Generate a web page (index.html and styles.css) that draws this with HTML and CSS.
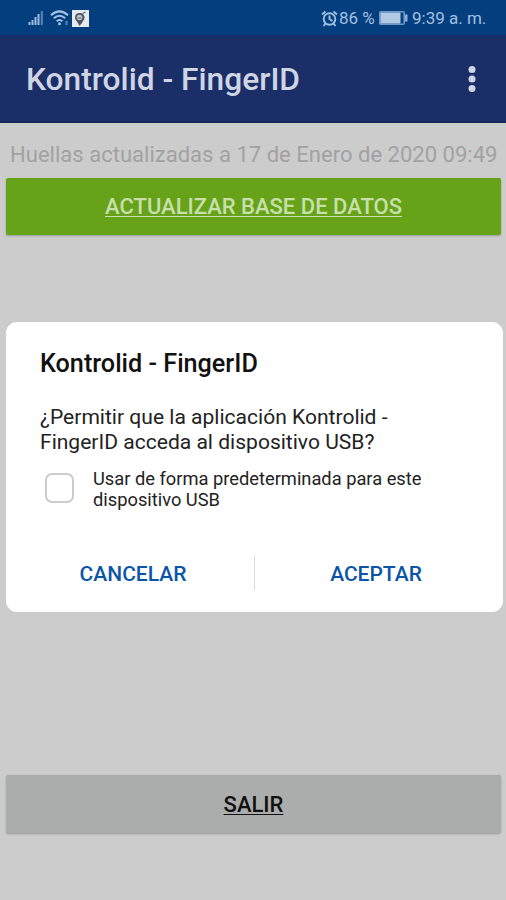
FILE: index.html
```html
<!DOCTYPE html>
<html lang="es">
<head>
<meta charset="utf-8">
<title>Kontrolid - FingerID</title>
<link rel="stylesheet" href="styles.css">
</head>
<body>
<div class="screen">
  <header class="status">
    <div class="status-left">
      <svg class="signal" width="16" height="16" viewBox="0 0 16 16"><path d="M1.5 12v3M4.500 10v5M7.500 7v8M10.500 4v11" stroke="#9dbce0" stroke-width="2"/><path d="M13.800 1v14" stroke="#5c86b8" stroke-width="2"/></svg>
      <svg class="wifi" width="20" height="16" viewBox="0 0 20 16" fill="none" stroke="#a3c1e4" stroke-width="2"><path d="M1 5.200Q9.500-2.400 18 5.200M3.800 8.300Q9.500 3.200 15.200 8.300M6.600 11.300Q9.500 8.700 12.400 11.300"/><circle cx="9.500" cy="13.800" r="1.500" fill="#a3c1e4" stroke="none"/><path d="M16.500 11v4" stroke="#5c86b8"/></svg>
      <svg class="badge" width="17" height="17" viewBox="0 0 17 17"><path fill="#e6ebf0" d="M0 0h17v17H0z"/><path fill="#4b5866" d="M7.500 3C4.500 3 3 5 3 7.500c0 2.500 2 3.500 2.500 5L7.500 16l2.500-3c.5-2 2.500-3 2.500-5.500S10.500 3 7.500 3z"/><circle cx="7.500" cy="7.500" r="2.800" fill="#c8c6c0"/><path d="M5.500 8h4M10.500 3.500l3-1.500" stroke="#59636d" stroke-width="1.200"/></svg>
    </div>
    <div class="status-right">
      <svg class="alarm" width="17" height="17" viewBox="0 0 17 17" fill="none" stroke="#a3bfe1" stroke-width="1.900"><circle cx="8.500" cy="9" r="5.800"/><path d="M8.500 5.500V9l3 2M1 4.500l3.500-3M16 4.500l-3.500-3M4.500 13.500L2.500 16M12.500 13.500l2 2.500"/></svg>
      <span class="percent">86 %</span>
      <svg class="battery" width="29" height="14" viewBox="0 0 29 14"><rect x=".8" y=".8" width="24.400" height="12.400" rx="1" fill="none" stroke="#6f98c8" stroke-width="1.600"/><path fill="#b3c8e3" d="M1.500 1.500h20v11h-20z"/><path fill="#8eafd7" d="M26 3.500h2.500v7H26z"/></svg>
      <span class="time">9:39 a. m.</span>
    </div>
  </header>
  <div class="appbar">
    <h1 class="app-title">Kontrolid - FingerID</h1>
    <svg class="more" width="8" height="28" viewBox="0 0 8 28" fill="#d0d6e6"><circle cx="4" cy="4.500" r="3.500"/><circle cx="4" cy="14" r="3.500"/><circle cx="4" cy="23.500" r="3.500"/></svg>
  </div>
  <main class="content">
    <p class="updated">Huellas actualizadas a 17 de Enero de 2020 09:49</p>
    <button class="btn update"><span class="label">ACTUALIZAR BASE DE DATOS</span></button>
    <section class="dialog">
      <h2 class="dialog-title">Kontrolid - FingerID</h2>
      <p class="question">¿Permitir que la aplicación Kontrolid -<br>FingerID acceda al dispositivo USB?</p>
      <label class="option"><span class="box"></span><span>Usar de forma predeterminada para este<br>dispositivo USB</span></label>
      <div class="actions">
        <button class="action cancel">CANCELAR</button>
        <span class="divider"></span>
        <button class="action accept">ACEPTAR</button>
      </div>
    </section>
    <button class="btn exit"><span class="label">SALIR</span></button>
  </main>
</div>
</body>
</html>
```
FILE: styles.css
```css
* { box-sizing: border-box; }
body { margin: 0; font-family: Roboto, "Liberation Sans", sans-serif; }
h1, h2, p { margin: 0; white-space: nowrap; }
svg { display: block; flex: none; }
button { border: 0; padding: 0; background: none; font: inherit; }
.screen { display: flex; flex-direction: column; width: 506px; height: 900px; background: #ccc; overflow: hidden; }
.status { display: flex; justify-content: space-between; height: 35px; padding: 1px 19px 0 28px; background: #033f7e; color: #a3bfe1; font-size: 17px; white-space: nowrap; }
.status-left, .status-right { display: flex; align-items: center; }
.wifi { margin-left: 6px; }
.badge { margin-left: 2px; }
.percent { width: 37px; margin-left: 1px; }
.battery { margin: 0 4px 0 3px; }
.time { width: 75px; }
.appbar { display: flex; align-items: center; justify-content: space-between; height: 88px; padding: 0 30px 0 26px; background: #1a2e68; border-bottom: 2px solid #152653; }
.app-title { color: #d0d5e3; font-size: 31.7px; font-weight: 500; line-height: 36px; padding-top: 4px; }
.more { margin-top: 1px; }
.content { display: flex; flex-direction: column; flex: 1; padding: 0 4px 0 6px; }
.updated { margin: 18px 0 0 4px; color: #a2a2a2; font-size: 22.05px; line-height: 28px; }
.btn { height: 57px; width: 495px; border-radius: 2px; font-size: 22px; font-weight: 500; box-shadow: 0 1px 2px rgba(0,0,0,.25); flex: none; }
.label { text-decoration: underline; text-decoration-thickness: 1px; text-underline-offset: 2px; }
.update { margin-top: 9px; background: #66a318; color: #c8dfac; }
.dialog { display: flex; flex-direction: column; width: 497px; height: 290px; margin-top: 87px; padding: 27px 0 0 34px; border-radius: 11px; background: #fff; color: #222; flex: none; }
.dialog-title { font-size: 25.2px; font-weight: 500; line-height: 30px; color: #111; }
.question { margin-top: 25px; font-size: 21.05px; line-height: 25px; }
.option { display: flex; margin-top: 14px; padding-left: 5px; font-size: 18.3px; line-height: 21px; white-space: nowrap; }
.box { width: 29px; height: 30px; margin: 5px 19px 0 0; border: 2px solid #ccc; border-radius: 7px; }
.actions { display: flex; align-items: center; width: 497px; height: 40px; margin: 43px 0 0 -34px; color: #0a55a8; font-size: 21px; font-weight: 500; }
.action { width: 248px; flex: none; color: inherit; padding-top: 1px; }
.cancel { padding-left: 6px; }
.accept { padding-right: 6px; }
.divider { width: 1px; height: 34px; background: #d8d8d8; }
.exit { margin-top: 163px; height: 58px; background: #aaadac; color: #111; }
```
